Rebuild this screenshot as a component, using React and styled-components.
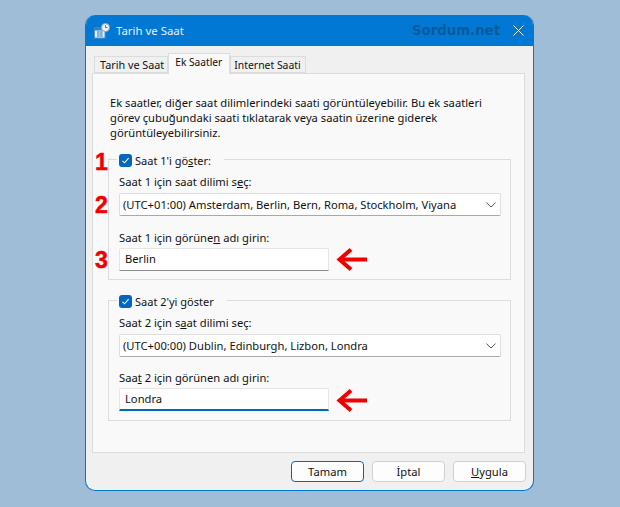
import React from "react";
import styled, { createGlobalStyle } from "styled-components";

const Global = createGlobalStyle`
  html, body { margin: 0; padding: 0; }
  body { background: #a0bdd8; width: 620px; height: 507px; overflow: hidden; font-family: "Noto Sans", "Open Sans", sans-serif; font-size: 11.2px; color: #111; }
  u { text-underline-offset: 1px; text-decoration-thickness: 1px; }
`;

const Page = styled.div`
  width: 620px;
  height: 507px;
  padding: 15px 86px 16px 85px;
  box-sizing: border-box;
`;

const Win = styled.div`
  height: 100%;
  display: flex;
  flex-direction: column;
  background: #f0f0f0;
  border: solid #0078d4;
  border-width: 0 1px 1px 1px;
  border-radius: 10px;
  overflow: hidden;
  box-sizing: border-box;
`;

const TitleBar = styled.div`
  height: 31px;
  flex: none;
  background: #0078d4;
  display: flex;
  align-items: center;
  padding: 0 9px 0 8px;
  color: #fff;
`;
const TitleText = styled.span`
  margin-left: 6px;
  font-size: 11.4px;
  color: #e6f2fb;
`;
const Brand = styled.span`
  margin-left: auto;
  font-family: "DejaVu Sans", sans-serif;
  font-weight: 700;
  font-size: 13.3px;
  color: #0a5a9c;
  margin-right: 13px;
`;

const Content = styled.div`
  flex: 1;
  display: flex;
  flex-direction: column;
  padding: 7px 8px 0 6px;
  min-height: 0;
`;

const Tabs = styled.div`
  display: flex;
  align-items: flex-end;
  height: 20px;
  padding-left: 2px;
  position: relative;
  z-index: 1;
`;
const Tab = styled.div`
  height: ${p => (p.$active ? "21px" : "17px")};
  padding: ${p => p.$pad};
  margin-bottom: ${p => (p.$active ? "-1px" : "0")};
  font-size: ${p => p.$size}px;
  box-sizing: border-box;
  display: flex;
  align-items: center;
  background: ${p => (p.$active ? "#f9f9f9" : "#f0f0f0")};
  border: 1px solid #dcdcdc;
  border-bottom: ${p => (p.$active ? "none" : "1px solid #dcdcdc")};
  white-space: nowrap;
`;

const Panel = styled.div`
  height: 380px;
  box-sizing: border-box;
  background: #f9f9f9;
  border: 1px solid #dcdcdc;
  padding: 21px 13px 0 15px;
`;
const Intro = styled.p`
  margin: 0 0 19px 2px;
  line-height: 15px;
  width: 385px;
`;

const Group = styled.div`
  position: relative;
  height: 121px;
  margin-bottom: 20px;
  box-sizing: border-box;
  border: 1px solid #dcdcdc;
  padding: 14px 9px 0 10px;
`;
const Legend = styled.div`
  position: absolute;
  left: 8px;
  top: -7px;
  background: #f9f9f9;
  display: flex;
  align-items: center;
  gap: 3px;
  padding: 0 13px 0 2px;
  height: 15px;
  line-height: 15px;
  font-size: 11px;
`;
const Check = styled.span`
  width: 13px;
  height: 13px;
  border-radius: 3px;
  background: #0067c0;
  display: flex;
  align-items: center;
  justify-content: center;
`;
const Label = styled.div`
  line-height: 16px;
  height: 16px;
  margin-bottom: ${p => p.$gap}px;
`;
const Select = styled.div`
  height: 23px;
  box-sizing: border-box;
  background: #fff;
  border: 1px solid #dedede;
  border-bottom-color: #a8a8a8;
  border-radius: 2px;
  display: flex;
  align-items: center;
  padding: 0 4px 0 3px;
  margin-bottom: ${p => p.$gap}px;
`;
const Chevron = styled.svg`
  margin-left: auto;
`;
const Input = styled.div`
  width: 210px;
  height: 23px;
  box-sizing: border-box;
  background: #fff;
  border: 1px solid #e6e6e6;
  border-bottom: ${p => (p.$focus ? "2px solid #0067c0" : "1px solid #8a8a8a")};
  border-radius: 2px 2px 0 0;
  display: flex;
  align-items: center;
  padding: 0 0 ${p => (p.$focus ? "1px" : "2px")} 5px;
`;
const Arrow = styled.svg`
  position: absolute;
  left: 227px;
  bottom: 8px;
`;
const Num = styled.span`
  position: absolute;
  left: -14px;
  top: ${p => p.$top}px;
  font-family: "Liberation Sans", sans-serif;
  font-weight: 700;
  font-size: 23px;
  line-height: 22px;
  color: #f00000;
  -webkit-text-stroke: 0.5px #f00000;
`;

const Footer = styled.div`
  flex: none;
  display: flex;
  justify-content: flex-end;
  gap: 8px;
  padding-top: 8px;
  margin-right: -1px;
`;
const Btn = styled.div`
  width: 73px;
  height: 21px;
  box-sizing: border-box;
  background: #fdfdfd;
  border: 1px solid ${p => (p.$def ? "#0067c0" : "#d0d0d0")};
  border-radius: 4px;
  display: flex;
  align-items: center;
  justify-content: center;
`;

const CheckMark = () => (
  <svg width="9" height="9" viewBox="0 0 9 9">
    <path d="M1.5 4.8 L3.6 6.8 L7.6 2.2" fill="none" stroke="#fff" strokeWidth="1.1" />
  </svg>
);
const ChevronIcon = () => (
  <Chevron width="10" height="6" viewBox="0 0 10 6">
    <path d="M0.5 0.7 L5 5 L9.5 0.7" fill="none" stroke="#555" strokeWidth="1" />
  </Chevron>
);
const RedArrow = () => (
  <Arrow width="31" height="23" viewBox="0 0 31 23">
    <path d="M31 11.5 H4" fill="none" stroke="#f00000" strokeWidth="4" />
    <path d="M15 1.5 L3.5 11.5 L15 21.5" fill="none" stroke="#f00000" strokeWidth="4" />
  </Arrow>
);
const AppIcon = () => (
  <svg width="16" height="16" viewBox="0 0 16 16">
    <rect x="0.5" y="5" width="10.5" height="10" fill="#dff0fb" stroke="#5a94c4" />
    <rect x="0.5" y="5" width="10.5" height="2.5" fill="#2f7fc1" />
    <path d="M3 9h6M3 11h6M3 13h6M4 8v6M7 8v6" stroke="#4a8cc4" strokeWidth="0.8" />
    <circle cx="11.5" cy="4.5" r="4" fill="#eef3f7" stroke="#8aa4b8" />
    <path d="M11.5 2.2v2.4h2" fill="none" stroke="#456" strokeWidth="0.8" />
  </svg>
);

const Close = () => (
  <svg width="11" height="11" viewBox="0 0 11 11">
    <path d="M0.5 0.5 L10.5 10.5 M10.5 0.5 L0.5 10.5" stroke="#fff" strokeWidth="1" />
  </svg>
);

export default function App() {
  return (
    <Page>
      <Global />
      <Win>
        <TitleBar>
          <AppIcon />
          <TitleText>Tarih ve Saat</TitleText>
          <Brand>Sordum.net</Brand>
          <Close />
        </TitleBar>
        <Content>
          <Tabs>
            <Tab $size={10.8} $pad="0 3px 0 5px">Tarih ve Saat</Tab>
            <Tab $active $size={10.2} $pad="0 7px 4px 6px">Ek Saatler</Tab>
            <Tab $size={10.4} $pad="0 4px 0 3px">Internet Saati</Tab>
          </Tabs>
          <Panel>
            <Intro>
              Ek saatler, diğer saat dilimlerindeki saati görüntüleyebilir. Bu ek saatleri görev çubuğundaki saati tıklatarak veya saatin üzerine giderek görüntüleyebilirsiniz.
            </Intro>
            <Group>
              <Num $top={-9}>1</Num>
              <Num $top={34}>2</Num>
              <Num $top={89}>3</Num>
              <Legend>
                <Check><CheckMark /></Check>
                <span>Saat 1'i gö<u>s</u>ter:</span>
              </Legend>
              <Label $gap={3}>Saat 1 için saat dilimi s<u>e</u>ç:</Label>
              <Select $gap={14}>
                (UTC+01:00) Amsterdam, Berlin, Bern, Roma, Stockholm, Viyana
                <ChevronIcon />
              </Select>
              <Label $gap={2}>Saat 1 için görüne<u>n</u> adı girin:</Label>
              <Input>Berlin</Input>
              <RedArrow />
            </Group>
            <Group>
              <Legend>
                <Check><CheckMark /></Check>
                <span>Saat 2'yi <u>g</u>öster</span>
              </Legend>
              <Label $gap={3}>Saat 2 için s<u>a</u>at dilimi seç:</Label>
              <Select $gap={13}>
                (UTC+00:00) Dublin, Edinburgh, Lizbon, Londra
                <ChevronIcon />
              </Select>
              <Label $gap={2}>Saa<u>t</u> 2 için görünen adı girin:</Label>
              <Input $focus>Londra</Input>
              <RedArrow />
            </Group>
          </Panel>
          <Footer>
            <Btn $def>Tamam</Btn>
            <Btn>İptal</Btn>
            <Btn><span><u>U</u>ygula</span></Btn>
          </Footer>
        </Content>
      </Win>
    </Page>
  );
}
